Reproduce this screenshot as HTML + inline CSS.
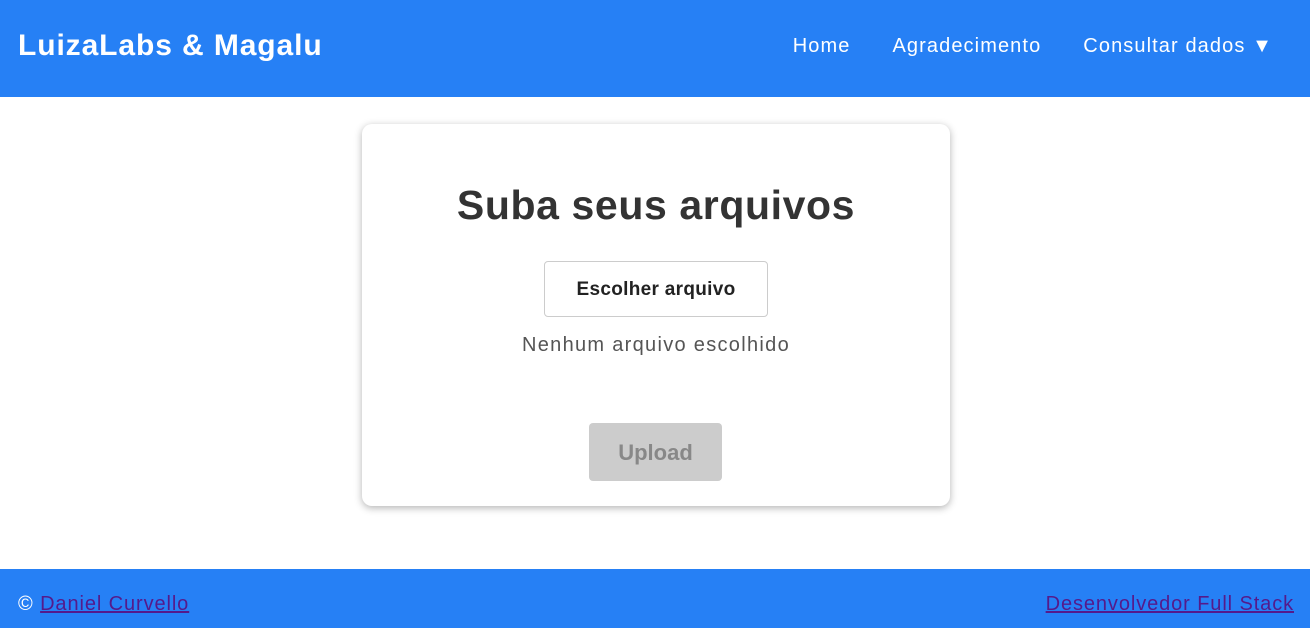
<!DOCTYPE html>
<html><head><style>
*{margin:0;padding:0;box-sizing:border-box}
body{width:1310px;height:628px;overflow:hidden;font-family:"Liberation Sans",sans-serif;background:#fff;position:relative}
header{position:absolute;top:0;left:0;right:0;height:97px;background:#2680f5;color:#fff}
.logo{position:absolute;left:18px;top:29px;font-size:30px;font-weight:bold;letter-spacing:0.9px}
nav{position:absolute;right:37px;top:35px;font-size:20px;letter-spacing:1.1px}
nav span{margin-left:42px}
.card{position:absolute;left:362px;top:124px;width:588px;height:382px;border-radius:10px;background:#fff;box-shadow:0 2px 8px rgba(0,0,0,.3)}
h1{position:absolute;top:58px;width:100%;text-align:center;font-size:41px;color:#333;letter-spacing:0.6px}
.choose{position:absolute;left:182px;top:137px;width:224px;height:56px;border:1px solid #ccc;border-radius:4px;text-align:center;line-height:56px;font-weight:bold;font-size:19px;color:#222;letter-spacing:0.3px}
.none{position:absolute;top:210px;width:100%;text-align:center;color:#555;font-size:20px;letter-spacing:1.3px}
.up{position:absolute;left:227px;top:299px;width:133px;height:58px;background:#ccc;border-radius:4px;color:#888;font-weight:bold;font-size:22px;text-align:center;line-height:60px}
footer{position:absolute;left:0;right:0;top:569px;height:59px;background:#2680f5;font-size:20px;letter-spacing:0.9px}
footer a{color:#551a8b}
.l{position:absolute;left:18px;top:24px;color:#fff}
.r{position:absolute;right:16px;top:24px}
</style></head><body>
<header><div class="logo">LuizaLabs &amp; Magalu</div>
<nav><span>Home</span><span>Agradecimento</span><span>Consultar dados ▼</span></nav></header>
<div class="card"><h1>Suba seus arquivos</h1><div class="choose">Escolher arquivo</div><div class="none">Nenhum arquivo escolhido</div><div class="up">Upload</div></div>
<footer><div class="l">© <a href="#">Daniel Curvello</a></div><div class="r"><a href="#">Desenvolvedor Full Stack</a></div></footer>
</body></html>
